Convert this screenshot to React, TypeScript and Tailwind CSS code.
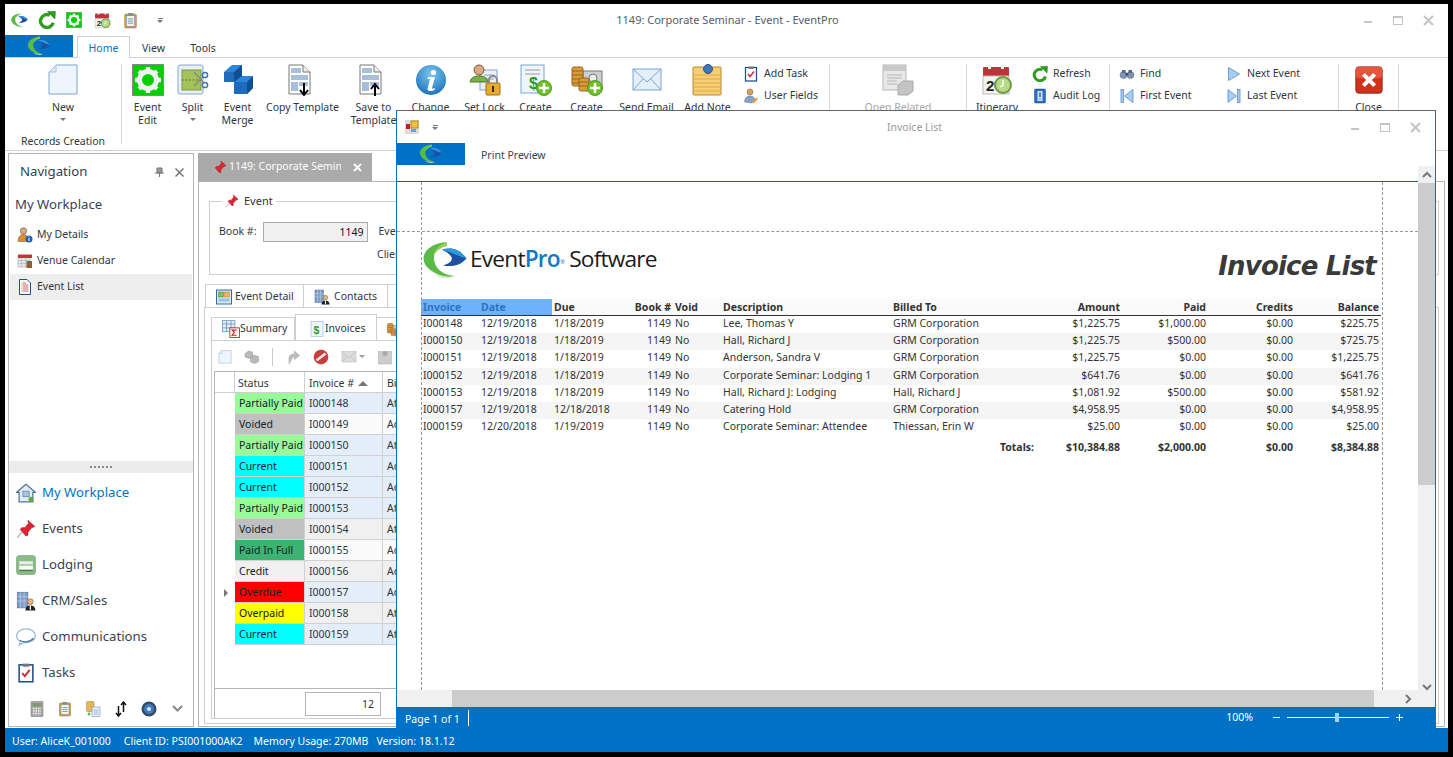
import React from "react";

type P = { s?: number };
const Ic = ({ s = 16, v = 32, children }: { s?: number; v?: number; children: React.ReactNode }) => (
  <svg width={s} height={s} viewBox={`0 0 ${v} ${v}`} className="shrink-0">{children}</svg>
);

const Logo = ({ w = 28, h = 24 }: { w?: number; h?: number }) => (
  <svg width={w} height={h} viewBox="0 0 44 40" className="shrink-0">
    <path d="M24 1C10 2 0 9 0 18c0 8 8 14 17 17 6 2 12 2 15 1-10-1-19-6-21-15C9 12 15 5 24 1z" fill="#5ab947" />
    <path d="M24 1c-8 3-13 8-14 14 4-6 9-9 14-10z" fill="#8fce5a" />
    <path d="M10 33c6 5 14 6 20 4-6 0-14-2-20-4z" fill="#cfe8bd" />
    <path d="M19 9c9-3 18-1 25 9-6 7-14 9-24 7 5-1 9-4 9-7 0-3-4-6-10-9z" fill="#1d4fa3" />
    <path d="M19 9c9-3 18-1 25 9-8-2-11-5-25-9z" fill="#2b9bd8" />
  </svg>
);
const RefreshI = ({ s = 18 }: P) => (
  <Ic s={s}>
    <path d="M21 7.500A11.500 11.500 0 1 0 27 21" fill="none" stroke="#2f9e1f" strokeWidth="6" />
    <path d="M17 1l14 0-1 13z" fill="#2f9e1f" stroke="#1b6d12" strokeWidth="1" />
  </Ic>
);
const Gear = ({ s = 32 }: P) => (
  <Ic s={s}>
    <rect x="0.500" y="0.500" width="31" height="31" fill="#00d000" stroke="#888" />
    <circle cx="16" cy="16" r="8.500" fill="none" stroke="#f2f2f2" strokeWidth="5" />
    <g stroke="#f2f2f2" strokeWidth="4.500">
      <path d="M16 3v5M16 24v5M3 16h5M24 16h5M7 7l4 4M21 21l4 4M25 7l-4 4M11 21l-4 4" />
    </g>
  </Ic>
);
const CalI = ({ s = 16 }: P) => (
  <Ic s={s}>
    <rect x="2" y="3" width="26" height="10" rx="1" fill="#c0323a" />
    <rect x="2" y="12" width="26" height="18" fill="#f3f3ef" stroke="#bbb" />
    <rect x="7" y="1" width="3" height="4" fill="#eee" />
    <rect x="20" y="1" width="3" height="4" fill="#eee" />
    <text x="5" y="27" fontSize="15" fontWeight="700" fill="#222" fontFamily="Liberation Sans">2</text>
    <circle cx="22" cy="21" r="8" fill="#b7d98a" stroke="#6c9a3d" strokeWidth="2" />
    <path d="M22 16v5l-3 2" stroke="#fff" strokeWidth="1.500" fill="none" />
  </Ic>
);
const Clip = ({ s = 16 }: P) => (
  <Ic s={s}>
    <rect x="5" y="4" width="22" height="26" rx="2" fill="#d9a441" stroke="#9a6c1a" />
    <rect x="8" y="7" width="16" height="20" fill="#f6f3ea" stroke="#5a7fa8" />
    <rect x="11" y="2" width="10" height="5" rx="1" fill="#8d8d8d" />
    <path d="M11 13h10M11 17h10M11 21h10" stroke="#5a7fa8" strokeWidth="1.500" />
  </Ic>
);
const NewDoc = ({ s = 32 }: P) => (
  <Ic s={s}>
    <path d="M9 1h21v29H2V8z" fill="#eef5fc" stroke="#7da5d2" />
    <path d="M9 1v7H2" fill="#dbe8f5" stroke="#a9c4e0" />
  </Ic>
);
const SplitI = ({ s = 32 }: P) => (
  <Ic s={s}>
    <rect x="1" y="1" width="25" height="29" rx="2" fill="#e9eff7" stroke="#8aa8cd" />
    <rect x="5" y="6" width="19" height="20" fill="#a3c25a" stroke="#7b9a3f" />
    <path d="M5 16h19" stroke="#5f7a2d" strokeDasharray="2 1.500" />
    <path d="M17 8l11 12M17 22l10-10" stroke="#888" strokeWidth="1.300" />
    <circle cx="28" cy="11" r="2.600" fill="#fff" stroke="#3f73b3" strokeWidth="1.500" />
    <circle cx="28" cy="21" r="2.600" fill="#fff" stroke="#3f73b3" strokeWidth="1.500" />
  </Ic>
);
const Merge = ({ s = 32 }: P) => (
  <Ic s={s}>
    <path d="M2 8l8-7h10v11h11v12l-6 6H12V18H2z" fill="#2a86d6" />
    <path d="M2 8h10v10H2zM12 18h13v12H12z" fill="#1c6cbb" />
    <path d="M12 8l8-7v11l-8 6zM25 18l6-6v12l-6 6z" fill="#0f4f94" />
  </Ic>
);
const Templ = ({ s = 32, up = false }: P & { up?: boolean }) => (
  <Ic s={s}>
    <path d="M2 1h14l7 7v22H2z" fill="#fff" stroke="#777" />
    <path d="M16 1v7h7" fill="#eee" stroke="#777" />
    <rect x="4" y="4" width="10" height="5" fill="#a9bfd9" />
    <rect x="4" y="11" width="17" height="5" fill="#a9bfd9" />
    <rect x="4" y="18" width="7" height="9" fill="#a9bfd9" />
    <rect x="12" y="18" width="9" height="4" fill="#a9bfd9" />
    {up ? <path d="M17 32V22M13 25l4-5 4 5" stroke="#000" strokeWidth="2" fill="none" /> : <path d="M17 19v11M13 26l4 5 4-5" stroke="#000" strokeWidth="2" fill="none" />}
  </Ic>
);
const Info = ({ s = 32 }: P) => (
  <Ic s={s}>
    <defs>
      <radialGradient id="ig" cx="50%" cy="30%" r="75%">
        <stop offset="0" stopColor="#7cc6ef" />
        <stop offset="1" stopColor="#1670b8" />
      </radialGradient>
    </defs>
    <circle cx="16" cy="16" r="15" fill="url(#ig)" />
    <circle cx="18.500" cy="8.500" r="2.600" fill="#fff" />
    <path d="M13 13h7l-3 11c0 1 1 1 3 0l-.5 2c-3 1.500-7 1.500-7-1l2.500-10h-2.500z" fill="#fff" />
  </Ic>
);
const LockI = ({ s = 32 }: P) => (
  <Ic s={s}>
    <rect x="11" y="6" width="17" height="20" fill="#eaf1f9" stroke="#7da5d2" />
    <path d="M15 11h10M15 15h10" stroke="#7da5d2" />
    <circle cx="10" cy="6" r="5" fill="#d8a982" stroke="#7c5a3a" />
    <path d="M1 18c1-5 5-6 9-6s8 1 9 6z" fill="#7bb04a" stroke="#4a7a28" />
    <rect x="17" y="19" width="14" height="12" rx="1" fill="#eaa92f" stroke="#a36f10" />
    <path d="M20 19v-3a4 4 0 0 1 8 0v3" fill="none" stroke="#8a8a8a" strokeWidth="2" />
    <rect x="23" y="22" width="2" height="6" fill="#333" />
  </Ic>
);
const CreateDoc = ({ s = 32 }: P) => (
  <Ic s={s}>
    <rect x="1" y="1" width="23" height="28" fill="#eef5fc" stroke="#7da5d2" />
    <path d="M5 6h15M5 10h15" stroke="#9a9a9a" />
    <text x="9" y="25" fontSize="16" fontWeight="700" fill="#2a9a2a" fontFamily="Liberation Sans">$</text>
    <circle cx="24" cy="24" r="7.500" fill="#6fbf2a" stroke="#4f9a18" />
    <path d="M24 19v10M19 24h10" stroke="#fff" strokeWidth="2.600" />
  </Ic>
);
const Coins = ({ s = 32 }: P) => (
  <Ic s={s}>
    <rect x="12" y="7" width="19" height="15" fill="#cfcfcf" stroke="#777" />
    <circle cx="22" cy="14" r="4" fill="#eee" stroke="#777" />
    <rect x="1" y="3" width="11" height="19" rx="2" fill="#d99a3d" stroke="#99661a" />
    <path d="M1 7h11M1 11h11M1 15h11M1 19h11" stroke="#99661a" />
    <rect x="8" y="14" width="10" height="13" rx="2" fill="#d99a3d" stroke="#99661a" />
    <path d="M8 18h10M8 22h10" stroke="#99661a" />
    <circle cx="24" cy="24" r="7.500" fill="#6fbf2a" stroke="#4f9a18" />
    <path d="M24 19v10M19 24h10" stroke="#fff" strokeWidth="2.600" />
  </Ic>
);
const Mail = ({ s = 32, c = "#7da5d2", f = "#e4eff9" }: P & { c?: string; f?: string }) => (
  <Ic s={s}>
    <rect x="2" y="5" width="28" height="21" fill={f} stroke={c} />
    <path d="M2 5l14 13L30 5M2 26l10-11M30 26L20 15" fill="none" stroke={c} />
  </Ic>
);
const Note = ({ s = 32 }: P) => (
  <Ic s={s}>
    <rect x="1" y="3" width="28" height="28" rx="1" fill="#f5cf78" stroke="#b88a2a" />
    <path d="M2 11h26M2 15h26M2 19h26M2 23h26M2 27h26" stroke="#e3a93a" />
    <circle cx="16" cy="5" r="4.500" fill="#3f78b8" stroke="#2a5588" />
  </Ic>
);
const Task = ({ s = 16 }: P) => (
  <Ic s={s}>
    <rect x="5" y="3" width="22" height="27" fill="#fff" stroke="#1f4f8a" strokeWidth="2.500" />
    <rect x="11" y="1" width="10" height="5" fill="#777" />
    <path d="M10 16l4 5 8-10" stroke="#d02a2a" strokeWidth="3" fill="none" />
  </Ic>
);
const UserF = ({ s = 16 }: P) => (
  <Ic s={s}>
    <circle cx="14" cy="8" r="6" fill="#d8a05a" stroke="#7c5a3a" />
    <path d="M3 28c1-10 6-12 11-12s9 2 10 8l-6 6z" fill="#8aa3c2" stroke="#54708f" />
    <path d="M18 29l9-10 3 3-9 9z" fill="#f0a030" />
  </Ic>
);
const OpenRel = ({ s = 32 }: P) => (
  <Ic s={s}>
    <rect x="1" y="1" width="23" height="25" fill="#e8e8e8" stroke="#b5b5b5" />
    <rect x="1" y="1" width="23" height="6" fill="#c9c9c9" />
    <path d="M5 11h15M5 14h15M5 17h10M5 20h10" stroke="#b5b5b5" />
    <path d="M16 21l5-4h10v10l-5 4H16z" fill="#c4c4c4" stroke="#aaa" />
  </Ic>
);
const AuditI = ({ s = 16 }: P) => (
  <Ic s={s}>
    <rect x="5" y="2" width="22" height="28" rx="2" fill="#2a6fc0" stroke="#1a4a88" />
    <rect x="11" y="6" width="10" height="20" fill="#cfe2f7" />
    <path d="M16 9v9M16 21v2" stroke="#1a4a88" strokeWidth="2.500" />
  </Ic>
);
const Binoc = ({ s = 16 }: P) => (
  <Ic s={s}>
    <circle cx="9" cy="18" r="7" fill="#7f93b3" stroke="#56688a" />
    <circle cx="23" cy="18" r="7" fill="#7f93b3" stroke="#56688a" />
    <rect x="6" y="8" width="7" height="6" fill="#56688a" />
    <rect x="19" y="8" width="7" height="6" fill="#56688a" />
    <rect x="13" y="14" width="6" height="5" fill="#3f4f6a" />
  </Ic>
);
const Nav = ({ s = 16, k }: P & { k: "f" | "n" | "l" }) => (
  <Ic s={s}>
    {k === "n" && <path d="M5 3l22 13L5 29z" fill="#a9cdf2" stroke="#4f87c7" strokeWidth="1.500" />}
    {k === "l" && <><path d="M4 3l17 13L4 29z" fill="#a9cdf2" stroke="#4f87c7" strokeWidth="1.500" /><rect x="23" y="3" width="5" height="26" fill="#a9cdf2" stroke="#4f87c7" strokeWidth="1.500" /></>}
    {k === "f" && <><path d="M28 3L11 16l17 13z" fill="#a9cdf2" stroke="#4f87c7" strokeWidth="1.500" /><rect x="4" y="3" width="5" height="26" fill="#a9cdf2" stroke="#4f87c7" strokeWidth="1.500" /></>}
  </Ic>
);
const CloseI = ({ s = 30 }: P) => (
  <Ic s={s}>
    <rect x="2" y="2" width="28" height="28" rx="3" fill="#d0321c" stroke="#8c1d0e" />
    <rect x="2" y="2" width="28" height="12" rx="3" fill="#e4553c" />
    <path d="M10 10l12 12M22 10L10 22" stroke="#fff" strokeWidth="4.500" />
  </Ic>
);
const Pin = ({ s = 16 }: P) => (
  <Ic s={s}>
    <path d="M19 2l11 10-5 2-6 7 0 5-3 1-9-10 2-3 5 0 6-7z" fill="#e0232e" stroke="#9b1620" />
    <path d="M9 21L2 30" stroke="#b5b5b5" strokeWidth="2" />
  </Ic>
);
const Person = ({ s = 16 }: P) => (
  <Ic s={s}>
    <circle cx="13" cy="8" r="6.500" fill="#d8a982" stroke="#6b4523" />
    <path d="M2 29c0-10 5-14 11-14s10 4 10 14z" fill="#d98b38" stroke="#8a5518" />
    <circle cx="24" cy="24" r="7" fill="#1f5fb0" />
    <path d="M24 22v6M24 19v1.500" stroke="#fff" strokeWidth="2" />
  </Ic>
);
const VCal = ({ s = 16 }: P) => (
  <Ic s={s}>
    <rect x="2" y="6" width="24" height="22" fill="#e6e6e6" stroke="#999" />
    <rect x="2" y="3" width="28" height="7" fill="#b93a3a" />
    <path d="M2 15h24M2 21h24M9 10v18M17 10v18" stroke="#aaa" />
    <rect x="19" y="16" width="11" height="14" fill="#8f5a3f" />
  </Ic>
);
const ListI = ({ s = 16 }: P) => (
  <Ic s={s}>
    <path d="M5 1h15l7 7v23H5z" fill="#fff" stroke="#1f4f8a" strokeWidth="2" />
    <path d="M9 8h9M9 12h14M9 16h14M9 20h14M9 24h14" stroke="#c03030" strokeWidth="1.500" strokeDasharray="2 1 10 0" />
  </Ic>
);
const Home = ({ s = 20 }: P) => (
  <Ic s={s}>
    <path d="M16 2L1 15h4v15h22V15h4z" fill="#e3ecf6" stroke="#51739c" strokeWidth="2" />
    <rect x="11" y="13" width="10" height="9" fill="#a9c4e0" stroke="#51739c" />
    <circle cx="24" cy="26" r="4" fill="#5fae3a" />
  </Ic>
);
const Bed = ({ s = 20 }: P) => (
  <Ic s={s}>
    <rect x="1" y="1" width="30" height="30" rx="4" fill="#8dbc8c" stroke="#5f9060" />
    <rect x="5" y="10" width="22" height="5" fill="#e5efe3" />
    <rect x="5" y="17" width="22" height="6" fill="#fff" />
    <rect x="5" y="24" width="22" height="2" fill="#4f7f50" />
  </Ic>
);
const Crm = ({ s = 20 }: P) => (
  <Ic s={s}>
    <rect x="2" y="2" width="17" height="25" fill="#7f9cc8" stroke="#4f6a96" />
    <path d="M7 2v25M13 2v25M2 9h17M2 16h17" stroke="#c3d3ea" />
    <circle cx="23" cy="17" r="4.500" fill="#e9b674" stroke="#7c5a3a" />
    <path d="M15 31c0-6 4-8 8-8s8 2 8 8z" fill="#222" />
    <path d="M23 23v7" stroke="#fff" strokeWidth="2" />
  </Ic>
);
const Bubble = ({ s = 20 }: P) => (
  <Ic s={s}>
    <path d="M16 3C7 3 1 8 1 14c0 4 2 7 6 9l-2 6 7-4h4c9 0 15-5 15-11S25 3 16 3z" fill="#fff" stroke="#9db8d6" strokeWidth="2" />
    <path d="M6 21c5 4 16 4 22-3" stroke="#3f78b8" strokeWidth="2" fill="none" />
  </Ic>
);
const Calc = ({ s = 16 }: P) => (
  <Ic s={s}>
    <rect x="4" y="1" width="24" height="30" rx="1" fill="#a9a9a9" stroke="#6f6f6f" />
    <rect x="7" y="4" width="18" height="7" fill="#7f9a6f" />
    <path d="M8 15h16M8 20h16M8 25h16" stroke="#eee" strokeWidth="3" strokeDasharray="3 2" />
  </Ic>
);
const Docs = ({ s = 16 }: P) => (
  <Ic s={s}>
    <rect x="3" y="1" width="15" height="20" rx="2" fill="#e6b65a" stroke="#a97d22" />
    <rect x="14" y="12" width="16" height="19" fill="#eaf1f9" stroke="#5a7fa8" />
    <path d="M17 18h10M17 22h10M17 26h10" stroke="#5a7fa8" />
    <path d="M5 26h6M8 23v6" stroke="#2a9a2a" strokeWidth="2" />
  </Ic>
);
const Arrows = ({ s = 16 }: P) => (
  <Ic s={s}>
    <path d="M11 10v20M6 24l5 6 5-6" stroke="#111" strokeWidth="3" fill="none" />
    <path d="M21 22V2M16 8l5-6 5 6" stroke="#111" strokeWidth="3" fill="none" />
  </Ic>
);
const Disc = ({ s = 16 }: P) => (
  <Ic s={s}>
    <circle cx="16" cy="16" r="15" fill="#3a4a66" />
    <circle cx="16" cy="16" r="10" fill="#3f7ac4" />
    <circle cx="16" cy="16" r="4" fill="#dfe8f5" />
  </Ic>
);
const GridBox = ({ s = 16 }: P) => (
  <Ic s={s}>
    <rect x="1" y="2" width="30" height="28" fill="#dfe9f5" stroke="#2f6aa8" strokeWidth="2" />
    <rect x="5" y="6" width="10" height="10" fill="#7fc05a" stroke="#3f8a2a" />
    <rect x="17" y="6" width="10" height="10" fill="#e8b860" stroke="#b58322" />
    <rect x="5" y="19" width="22" height="6" fill="#9dbfe2" />
  </Ic>
);
const SumI = ({ s = 18 }: P) => (
  <Ic s={s}>
    <rect x="1" y="1" width="22" height="20" fill="#e3edf8" stroke="#3f73b3" />
    <path d="M1 7h22M1 14h22M8 1v20M16 1v20" stroke="#3f73b3" />
    <rect x="14" y="14" width="17" height="17" fill="#fff" stroke="#b02020" strokeWidth="1.500" />
    <path d="M26 18h-8l4 4-4 5h8" stroke="#c02020" strokeWidth="2" fill="none" />
  </Ic>
);
const Dollar = ({ s = 16 }: P) => (
  <Ic s={s}>
    <rect x="4" y="1" width="24" height="30" fill="#eef5fc" stroke="#7da5d2" />
    <text x="9" y="25" fontSize="21" fontWeight="700" fill="#2f9a2f" fontFamily="Liberation Sans">$</text>
  </Ic>
);
const Stop = ({ s = 16 }: P) => (
  <Ic s={s}>
    <circle cx="16" cy="16" r="14" fill="#cf3a3a" stroke="#8f1f1f" />
    <path d="M7 23L25 9" stroke="#eee" strokeWidth="5" />
  </Ic>
);
const Cubes = ({ s = 16 }: P) => (
  <Ic s={s}>
    <path d="M2 9l7-5 8 2v9l-7 4-8-3zM13 17l7-5 9 3v10l-7 4-9-3z" fill="#b9b9b9" stroke="#999" />
  </Ic>
);
const GrayRedo = ({ s = 16 }: P) => (
  <Ic s={s}>
    <path d="M8 30V18c0-6 5-8 11-8V4l10 9-10 8v-5c-4 0-6 2-6 6l-5 8z" fill="#bdbdbd" stroke="#a0a0a0" />
  </Ic>
);
const GrayDoc = ({ s = 16 }: P) => (
  <Ic s={s}>
    <rect x="3" y="5" width="26" height="25" fill="#cdcdcd" stroke="#aaa" />
    <circle cx="16" cy="9" r="5" fill="#aaa" />
  </Ic>
);
const Drop = () => <div className="mx-auto mt-1 w-0 h-0 border-x-[3px] border-t-[3px] border-x-transparent border-t-[#777]" />;

const Big = ({ w, icon, l1, l2, drop, gray }: { w: number; icon: React.ReactNode; l1: string; l2?: string; drop?: boolean; gray?: boolean }) => (
  <div style={{ width: w }} className="flex flex-col items-center shrink-0">
    <div className="h-[34px] flex items-center justify-center">{icon}</div>
    <div className={`mt-[4px] text-center leading-[13px] whitespace-nowrap ${gray ? "text-[#a8a8a8]" : ""}`}>{l1}</div>
    {l2 && <div className="text-center leading-[13px] whitespace-nowrap">{l2}</div>}
    {drop && <Drop />}
  </div>
);
const Small = ({ icon, t, w }: { icon: React.ReactNode; t: string; w?: number }) => (
  <div style={{ width: w }} className="flex items-center gap-[6px] h-[22px] whitespace-nowrap">
    <span className="w-[14px] flex justify-center">{icon}</span>
    <span>{t}</span>
  </div>
);
const Sep = () => <div className="w-px self-stretch bg-[#d8d8d8] mt-[6px] mb-[6px] shrink-0" />;

const Ctl = ({ dark = false }: { dark?: boolean }) => (
  <div className="flex items-center">
    <div className="w-[30px] flex justify-center"><div className="w-[8px] h-[2px] mt-[3px] bg-[#c4c4c4]" /></div>
    <div className="w-[30px] flex justify-center"><div className="w-[10px] h-[9px] border border-[#c4c4c4] border-t-2" /></div>
    <div className="w-[30px] flex justify-center">
      <svg width="11" height="11" viewBox="0 0 11 11"><path d="M1 1l9 9M10 1l-9 9" stroke={dark ? "#aaa" : "#c4c4c4"} strokeWidth="2" /></svg>
    </div>
  </div>
);

const grid = [
  ["Partially Paid", "bg-[#98fb98]", "I000148", "bg-[#e3eefa]", "At"],
  ["Voided", "bg-[#c0c0c0]", "I000149", "bg-[#fafafa]", "Ad"],
  ["Partially Paid", "bg-[#98fb98]", "I000150", "bg-[#e3eefa]", "At"],
  ["Current", "bg-[#00ffff]", "I000151", "bg-[#e3eefa]", "Ad"],
  ["Current", "bg-[#00ffff]", "I000152", "bg-[#e3eefa]", "Ad"],
  ["Partially Paid", "bg-[#98fb98]", "I000153", "bg-[#e3eefa]", "At"],
  ["Voided", "bg-[#c0c0c0]", "I000154", "bg-[#f0f0f0]", "At"],
  ["Paid In Full", "bg-[#3cb371]", "I000155", "bg-[#fafafa]", "Ad"],
  ["Credit", "bg-[#f0f0f0]", "I000156", "bg-[#f0f0f0]", "Ad"],
  ["Overdue", "bg-[#ff0000]", "I000157", "bg-[#e3eefa]", "Ad"],
  ["Overpaid", "bg-[#ffff00]", "I000158", "bg-[#f0f0f0]", "At"],
  ["Current", "bg-[#00ffff]", "I000159", "bg-[#e3eefa]", "At"],
];

const rows = [
  ["I000148", "12/19/2018", "1/18/2019", "Lee, Thomas Y", "GRM Corporation", "$1,225.75", "$1,000.00", "$225.75", 0],
  ["I000150", "12/19/2018", "1/18/2019", "Hall, Richard J", "GRM Corporation", "$1,225.75", "$500.00", "$725.75", 1],
  ["I000151", "12/19/2018", "1/18/2019", "Anderson, Sandra V", "GRM Corporation", "$1,225.75", "$0.00", "$1,225.75", 0],
  ["I000152", "12/19/2018", "1/18/2019", "Corporate Seminar: Lodging 1", "GRM Corporation", "$641.76", "$0.00", "$641.76", 1],
  ["I000153", "12/19/2018", "1/18/2019", "Hall, Richard J: Lodging", "Hall, Richard J", "$1,081.92", "$500.00", "$581.92", 0],
  ["I000157", "12/19/2018", "12/18/2018", "Catering Hold", "GRM Corporation", "$4,958.95", "$0.00", "$4,958.95", 1],
  ["I000159", "12/20/2018", "1/19/2019", "Corporate Seminar: Attendee", "Thiessan, Erin W", "$25.00", "$0.00", "$25.00", 0],
] as const;

const navBig: [React.ReactNode, string, boolean][] = [
  [<Home />, "My Workplace", true],
  [<Pin s={20} />, "Events", false],
  [<Bed />, "Lodging", false],
  [<Crm />, "CRM/Sales", false],
  [<Bubble />, "Communications", false],
  [<Task s={20} />, "Tasks", false],
];

export default function App() {
  return (
    <div className="relative w-[1453px] h-[757px] overflow-hidden bg-black pl-[5px] pr-[5px] pt-[4px] pb-[5px] font-['Noto_Sans',sans-serif] text-[10.5px] text-[#2f3640]">
      <div className="h-full flex flex-col bg-white">
        {/* title bar */}
        <div className="h-[32px] shrink-0 flex items-center">
          <div className="flex items-center">
            <div className="w-[28px] flex justify-center"><Logo w={17} h={15} /></div>
            <div className="w-[27px] flex justify-center"><RefreshI /></div>
            <div className="w-[28px] flex justify-center"><Gear s={16} /></div>
            <div className="w-[28px] flex justify-center"><CalI s={17} /></div>
            <div className="w-[28px] flex justify-center"><Clip s={17} /></div>
            <div className="w-[32px] flex flex-col items-center gap-px">
              <div className="w-[5px] h-px bg-[#777]" />
              <div className="w-0 h-0 border-x-[3px] border-t-[3px] border-x-transparent border-t-[#777]" />
            </div>
          </div>
          <div className="flex-1 text-center text-[#555b66] pr-[74px] text-[11px]">1149: Corporate Seminar - Event - EventPro</div>
          <div className="pr-[5px]"><Ctl /></div>
        </div>
        {/* tabs */}
        <div className="h-[22px] shrink-0 flex items-end border-b border-[#d0d0d0]">
          <div className="w-[68px] h-[22px] bg-[#0072c6] flex items-center justify-center"><Logo w={24} h={20} /></div>
          <div className="ml-[4px] w-[53px] h-[22px] pt-[3px] bg-white border border-b-0 border-[#d0d0d0] -mb-px text-[#0072c6] flex items-center justify-center">Home</div>
          <div className="w-[47px] h-[21px] pt-[3px] text-center leading-[18px]">View</div>
          <div className="w-[52px] h-[21px] pt-[3px] text-center leading-[18px]">Tools</div>
        </div>
        {/* ribbon */}
        <div className="h-[93px] shrink-0 flex items-stretch border-b border-[#d0d0d0] overflow-hidden">
          <div className="w-[116px] flex flex-col items-center pt-[5px] shrink-0">
            <Big w={116} icon={<NewDoc />} l1="New" drop />
            <div className="mt-auto">Records Creation</div>
          </div>
          <Sep />
          <div className="flex pt-[5px] w-[707px] shrink-0 pl-[3px]">
            <Big w={45} icon={<Gear />} l1="Event" l2="Edit" />
            <Big w={45} icon={<SplitI />} l1="Split" drop />
            <Big w={45} icon={<Merge />} l1="Event" l2="Merge" />
            <Big w={85} icon={<Templ />} l1="Copy Template" />
            <Big w={57} icon={<Templ up />} l1="Save to" l2="Template" />
            <Big w={57} icon={<Info />} l1="Change" />
            <Big w={51} icon={<LockI />} l1="Set Lock" />
            <Big w={51} icon={<CreateDoc />} l1="Create" />
            <Big w={51} icon={<Coins />} l1="Create" />
            <Big w={69} icon={<Mail />} l1="Send Email" />
            <Big w={53} icon={<Note />} l1="Add Note" />
            <div className="ml-[10px]">
              <Small icon={<Task />} t="Add Task" />
              <Small icon={<UserF />} t="User Fields" />
              <Small icon={<GrayDoc />} t="" />
            </div>
          </div>
          <Sep />
          <div className="w-[136px] flex pt-[5px] shrink-0"><Big w={136} icon={<OpenRel />} l1="Open Related" gray /></div>
          <Sep />
          <div className="w-[142px] flex pt-[5px] shrink-0">
            <Big w={60} icon={<CalI s={32} />} l1="Itinerary" />
            <div className="ml-[6px]">
              <Small icon={<RefreshI s={16} />} t="Refresh" />
              <Small icon={<AuditI />} t="Audit Log" />
              <Small icon={<Clip s={14} />} t="" />
            </div>
          </div>
          <Sep />
          <div className="w-[228px] flex pt-[5px] pl-[10px] shrink-0">
            <div className="w-[107px]">
              <Small icon={<Binoc />} t="Find" />
              <Small icon={<Nav k="f" />} t="First Event" />
              <Small icon={<Nav k="n" />} t="" />
            </div>
            <div>
              <Small icon={<Nav k="n" />} t="Next Event" />
              <Small icon={<Nav k="l" />} t="Last Event" />
              <Small icon={<GrayDoc />} t="" />
            </div>
          </div>
          <Sep />
          <div className="w-[59px] flex pt-[5px] shrink-0"><Big w={59} icon={<CloseI />} l1="Close" /></div>
          <Sep />
        </div>
        {/* main */}
        <div className="flex-1 flex min-h-0 pl-[3px] pt-[2px] pb-[1px]">
          {/* navigation */}
          <div className="w-[186px] shrink-0 border border-[#b5b5b5] flex flex-col">
            <div className="h-[34px] pt-[2px] flex items-center pl-[11px] pr-[9px] text-[13.2px] text-[#2f3f58]">
              <span className="flex-1">Navigation</span>
              <svg width="9" height="10" viewBox="0 0 9 10" className="mr-[11px]"><path d="M2 1h5v5H2zM0 6h9M4.500 6v4" stroke="#777" fill="#999" /></svg>
              <svg width="9" height="9" viewBox="0 0 9 9"><path d="M0.500 0.500l8 8M8.500 0.500l-8 8" stroke="#777" strokeWidth="1.500" /></svg>
            </div>
            <div className="pl-[6px] text-[13.2px] leading-[20px] mt-[6px] text-[#3a3f58]">My Workplace</div>
            <div className="mt-[8px] px-[1px]">
              {[[<Person />, "My Details"], [<VCal />, "Venue Calendar"], [<ListI />, "Event List"]].map(([ic, t], i) => (
                <div key={i} className={`h-[26px] flex items-center gap-[4px] pl-[7px] ${i === 2 ? "bg-[#eeeeee]" : ""}`}>
                  {ic}
                  <span>{t}</span>
                </div>
              ))}
            </div>
            <div className="mt-auto h-[12px] bg-[#ececec] flex items-center justify-center">
              <div className="w-[22px] h-[2px] border-t-2 border-dotted border-[#888]" />
            </div>
            <div className="flex flex-col pt-[2px]">
              {navBig.map(([ic, t, a], i) => (
                <div key={i} className="h-[36px] flex items-center gap-[8px] pl-[9px]">
                  <span className="w-[16px] flex justify-center">{ic}</span>
                  <span className={`text-[13.2px] whitespace-nowrap ${a ? "text-[#0072c6]" : "text-[#3a4250]"}`}>{t}</span>
                </div>
              ))}
            </div>
            <div className="h-[35px] flex items-center pl-[20px] gap-[12px]">
              <Calc />
              <Clip s={16} />
              <Docs />
              <Arrows />
              <Disc />
              <svg width="11" height="7" viewBox="0 0 11 7" className="ml-[3px]"><path d="M1 1l4.500 4.500L10 1" stroke="#888" strokeWidth="2" fill="none" /></svg>
            </div>
          </div>
          {/* document */}
          <div className="flex-1 ml-[4px] mr-[3px] flex flex-col min-w-0">
            <div className="h-[28px] flex shrink-0">
              <div className="w-[174px] bg-[#aaaaaa] text-white flex items-center pl-[14px] gap-[2px]">
                <Pin s={15} />
                <span className="w-[112px] overflow-hidden whitespace-nowrap">1149: Corporate Seminar</span>
                <svg width="9" height="9" viewBox="0 0 9 9" className="ml-[10px] shrink-0"><path d="M1 1l7 7M8 1l-7 7" stroke="#fff" strokeWidth="1.800" /></svg>
              </div>
            </div>
            <div className="flex-1 border border-[#b5b5b5] flex flex-col min-h-0 px-[5px]">
              <fieldset className="ml-[5px] mt-[11px] h-[82px] border border-[#cfcfcf] shrink-0 pl-[9px]">
                <legend className="ml-[3px] px-[3px] flex items-center gap-[5px] text-[11px]"><Pin s={14} />Event</legend>
                <div className="flex items-center mt-[12px] gap-[7px]">
                  <span>Book #:</span>
                  <div className="w-[105px] h-[20px] bg-[#f0f0f0] border border-[#aaa] text-right pr-[4px] leading-[18px] text-[#111]">1149</div>
                  <span className="ml-[3px]">Eve</span>
                </div>
                <div className="pl-[158px] mt-[5px]">Clien</div>
              </fieldset>
              <div className="flex mt-[9px] pl-[1px] h-[23px] shrink-0">
                <div className="w-[99px] pt-px border border-b-0 border-[#cfcfcf] flex items-center gap-[3px] pl-[10px]"><GridBox />Event Detail</div>
                <div className="w-[84px] pt-px border border-b-0 border-l-0 border-[#cfcfcf] flex items-center gap-[4px] pl-[10px]"><Crm s={16} />Contacts</div>
                <div className="w-[84px] border border-b-0 border-l-0 border-[#cfcfcf]" />
              </div>
              <div className="flex-1 border border-[#cfcfcf] min-h-0 flex flex-col px-[6px] mb-[2px]">
                <div className="flex h-[33px] items-end shrink-0">
                  <div className="w-[84px] h-[24px] pb-[2px] border border-b-0 border-[#cfcfcf] flex items-center pl-[10px]"><SumI />Summary</div>
                  <div className="w-[82px] h-[27px] pt-[2px] border border-b-0 border-[#cfcfcf] bg-white flex items-center pl-[13px]"><Dollar />Invoices</div>
                  <div className="w-[80px] h-[24px] border border-b-0 border-l-0 border-[#cfcfcf] pl-[10px] flex items-center"><Coins s={16} /></div>
                </div>
                <div className="flex-1 border border-[#cfcfcf] min-h-0 flex flex-col -mt-px mb-[4px]">
                  <div className="h-[30px] pt-px flex items-center gap-[12px] pl-[6px] shrink-0">
                    <NewDoc s={14} />
                    <Cubes />
                    <div className="w-px h-[18px] bg-[#ccc]" />
                    <GrayRedo />
                    <Stop />
                    <div className="flex items-center gap-[2px]"><Mail s={16} c="#b5b5b5" f="#dcdcdc" /><div className="w-0 h-0 border-x-[3px] border-t-[3px] border-x-transparent border-t-[#999]" /></div>
                    <GrayDoc />
                    <GrayDoc />
                  </div>
                  <div className="flex-1 border border-[#b5b5b5] border-b-0 ml-[2px] flex flex-col min-h-0">
                    <div className="flex h-[21px] shrink-0 border-b border-[#cfcfcf]">
                      <div className="w-[20px] border-r border-[#cfcfcf]" />
                      <div className="w-[70px] border-r border-[#cfcfcf] pl-[3px] leading-[23px]">Status</div>
                      <div className="w-[78px] border-r border-[#cfcfcf] pl-[4px] pt-[3px] flex items-center gap-[4px]">Invoice #
                        <div className="w-0 h-0 border-x-[5px] border-b-[5px] border-x-transparent border-b-[#777]" />
                      </div>
                      <div className="pl-[4px] leading-[23px]">Bil</div>
                    </div>
                    <div className="flex-1 min-h-0">
                      {grid.map((r, i) => (
                        <div key={i} className="flex h-[21px]">
                          <div className="w-[20px] flex items-center justify-center pl-[2px]">
                            {r[2] === "I000157" && <div className="w-0 h-0 border-y-[4px] border-l-[4px] border-y-transparent border-l-[#777]" />}
                          </div>
                          <div className={`w-[70px] ${r[1]} pl-[4px] leading-[20px] border-b border-[#d0d0d0] border-r border-r-[#d0d0d0] text-[#10202a] whitespace-nowrap`}>{r[0]}</div>
                          <div className={`w-[78px] ${r[3]} pl-[4px] leading-[20px] border-b border-r border-[#d0d0d0]`}>{r[2]}</div>
                          <div className={`flex-1 ${r[3]} pl-[4px] leading-[20px] border-b border-[#d0d0d0]`}>{r[4]}</div>
                        </div>
                      ))}
                    </div>
                    <div className="h-[30px] border-t border-[#b5b5b5] shrink-0 flex items-center pl-[90px]">
                      <div className="w-[76px] h-[24px] border border-[#b5b5b5] text-right pr-[6px] leading-[22px]">12</div>
                    </div>
                  </div>
                </div>
              </div>
            </div>
          </div>
        </div>
        {/* status */}
        <div className="h-[24px] pt-[3px] shrink-0 bg-[#0072c6] text-white flex items-center pl-[7px] gap-[12px] whitespace-nowrap">
          <span>User: AliceK_001000</span>
          <span className="ml-px">Client ID: PSI001000AK2</span>
          <span className="-ml-px">Memory Usage: 270MB</span>
          <span className="-ml-[4px]">Version: 18.1.12</span>
        </div>
      </div>

      {/* Invoice List window */}
      <div className="absolute left-[396px] top-[110px] w-[1040px] h-[618px] bg-white border-t border-t-[#666] border-x border-x-[#0072c6] flex flex-col">
        <div className="h-[32px] shrink-0 flex items-center">
          <div className="w-[28px] flex justify-center pl-[1px]">
            <svg width="14" height="14" viewBox="0 0 14 14"><rect width="14" height="14" fill="#ddd" /><rect x="1" y="4" width="4" height="5" fill="#c02020" /><rect x="6" y="1" width="7" height="7" fill="#f0c040" stroke="#b58a20" /><rect x="6" y="9" width="5" height="3" fill="#6f9fd8" /></svg>
          </div>
          <div className="w-[20px] flex flex-col items-center gap-px">
            <div className="w-[5px] h-px bg-[#777]" />
            <div className="w-0 h-0 border-x-[3px] border-t-[3px] border-x-transparent border-t-[#777]" />
          </div>
          <div className="flex-1 text-center text-[#9a9a9a] pl-[44px] pt-[2px]">Invoice List</div>
          <div className="pr-[5px]"><Ctl /></div>
        </div>
        <div className="h-[39px] shrink-0 flex border-b border-[#0068b3]">
          <div className="w-[68px] h-[22px] bg-[#0072c6] flex items-center justify-center"><Logo w={24} h={20} /></div>
          <div className="pl-[16px] h-[23px] leading-[25px] text-[#3a3f58]">Print Preview</div>
        </div>
        <div className="flex-1 flex min-h-0">
          <div className="flex-1 flex flex-col min-w-0">
            <div className="relative flex-1 min-h-0 overflow-hidden">
              {/* guide lines */}
              <div className="absolute left-[24px] top-0 bottom-0 border-l border-dashed border-[#999]" />
              <div className="absolute left-[985px] top-0 bottom-0 border-l border-dashed border-[#999]" />
              <div className="absolute left-0 right-0 top-[49px] border-t border-dashed border-[#999]" />
              {/* page */}
              <div className="ml-[24px] w-[960px] pt-[59px] text-[#333]">
                <div className="flex h-[58px]">
                  <div className="flex items-start ml-px">
                    <Logo w={46} h={39} />
                    <span className="ml-[2px] mt-[2px] text-[22.7px] leading-[32px] font-['Open_Sans',sans-serif] text-[#1a1a1a] tracking-[-0.8px]">Event<span className="text-[#1479c2] font-semibold">Pro</span><sup className="text-[6px] text-[#1479c2]">®</sup> Software</span>
                  </div>
                  <div className="flex-1 text-right pt-[7px] pr-[5px] text-[26px] leading-[36px] font-bold italic font-['DejaVu_Sans',sans-serif] text-[#3a3a3a] tracking-[-0.8px]">Invoice List</div>
                </div>
                <div className="flex h-[17px] bg-[#fafafa] border-b border-[#333] font-bold leading-[16px] whitespace-nowrap">
                  <div className="w-[131px] flex bg-[#6cb2ff] text-[#2f73bd] pl-[2px]">
                    <span className="w-[58px]">Invoice</span>
                    <span>Date</span>
                  </div>
                  <span className="w-[78px] pl-[2px]">Due</span>
                  <span className="w-[41px] text-right">Book #</span>
                  <span className="w-[52px] pl-[4px]">Void</span>
                  <span className="w-[170px]">Description</span>
                  <span className="w-[130px]">Billed To</span>
                  <span className="w-[97px] text-right">Amount</span>
                  <span className="w-[86px] text-right">Paid</span>
                  <span className="w-[87px] text-right">Credits</span>
                  <span className="w-[86px] text-right">Balance</span>
                </div>
                {rows.map((r, i) => (
                  <div key={i} className={`flex h-[17.2px] leading-[14px] whitespace-nowrap ${r[8] ? "bg-[#f5f5f5]" : ""}`}>
                    <span className="w-[60px] pl-[2px]">{r[0]}</span>
                    <span className="w-[73px]">{r[1]}</span>
                    <span className="w-[76px]">{r[2]}</span>
                    <span className="w-[41px] text-right">1149</span>
                    <span className="w-[52px] pl-[4px]">No</span>
                    <span className="w-[170px]">{r[3]}</span>
                    <span className="w-[130px]">{r[4]}</span>
                    <span className="w-[97px] text-right">{r[5]}</span>
                    <span className="w-[86px] text-right">{r[6]}</span>
                    <span className="w-[87px] text-right">$0.00</span>
                    <span className="w-[86px] text-right">{r[7]}</span>
                  </div>
                ))}
                <div className="flex mt-[3px] font-bold leading-[16px] whitespace-nowrap">
                  <span className="w-[613px] text-right">Totals:</span>
                  <span className="w-[86px] text-right">$10,384.88</span>
                  <span className="w-[86px] text-right">$2,000.00</span>
                  <span className="w-[87px] text-right">$0.00</span>
                  <span className="w-[86px] text-right">$8,384.88</span>
                </div>
              </div>
            </div>
            <div className="h-[17px] shrink-0 flex bg-[#f0f0f0]">
              <div className="w-[55px]" />
              <div className="flex-1 bg-[#cccccc]" />
              <div className="w-[44px] flex items-center justify-end pr-[6px]">
                <svg width="7" height="10" viewBox="0 0 7 10"><path d="M1 1l4 4-4 4" stroke="#777" strokeWidth="2" fill="none" /></svg>
              </div>
            </div>
          </div>
          <div className="w-[17px] shrink-0 -mt-[16px] flex flex-col bg-[#f0f0f0]">
            <div className="h-[17px] flex items-center justify-center">
              <svg width="10" height="7" viewBox="0 0 10 7"><path d="M1 6l4-4 4 4" stroke="#777" strokeWidth="2" fill="none" /></svg>
            </div>
            <div className="h-[302px] bg-[#cccccc]" />
            <div className="flex-1" />
            <div className="h-[33px] flex justify-center pt-[10px]">
              <svg width="10" height="7" viewBox="0 0 10 7"><path d="M1 1l4 4 4-4" stroke="#777" strokeWidth="2" fill="none" /></svg>
            </div>
          </div>
        </div>
        <div className="h-[21px] shrink-0 bg-[#0072c6] text-white flex items-center pl-[8px]">
          <span className="pr-[8px] border-r border-white h-[16px] leading-[18px]">Page 1 of 1</span>
          <span className="ml-auto mr-[20px] pt-px">100%</span>
          <div className="w-[7px] h-px bg-white mr-[7px]" />
          <div className="w-[102px] h-px bg-white relative flex justify-center mr-[7px]">
            <div className="absolute -top-[4px] left-[48px] w-[4px] h-[9px] bg-[#a5d4f5]" />
          </div>
          <svg width="7" height="7" viewBox="0 0 7 7" className="mr-[32px]"><path d="M3.500 0v7M0 3.500h7" stroke="#fff" /></svg>
        </div>
      </div>
    </div>
  );
}
